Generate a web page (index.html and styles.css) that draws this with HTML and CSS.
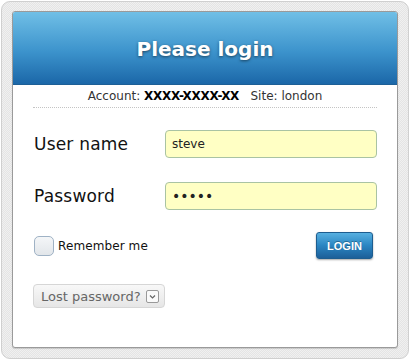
FILE: index.html
```html
<!DOCTYPE html>
<html>
<head>
<meta charset="utf-8">
<link rel="stylesheet" href="styles.css">
</head>
<body>
<div class="frame">
  <div class="card">
    <div class="header"><h1 class="title">Please login</h1></div>
    <div class="account">Account: <b class="acc-id">XXXX-XXXX-XX</b>&nbsp;&nbsp; Site: london</div>
    <div class="form">
      <div class="row">
        <label class="label">User name</label>
        <div class="input">steve</div>
      </div>
      <div class="row">
        <label class="label">Password</label>
        <div class="input dots">•••••</div>
      </div>
      <div class="actions">
        <div class="remember"><span class="checkbox"></span><span class="rem-text">Remember me</span></div>
        <button class="login">LOGIN</button>
      </div>
      <div class="lost-wrap">
        <div class="lost">Lost password? <span class="caret"><svg width="9" height="9" viewBox="0 0 9 9"><path d="M2 3.5 L4.5 6 L7 3.5" fill="none" stroke="#666" stroke-width="1.2"/></svg></span></div>
      </div>
    </div>
  </div>
</div>
</body>
</html>
```
FILE: styles.css
```css
html, body { margin: 0; padding: 0; background: #fff; }
body { font-family: "DejaVu Sans", Verdana, sans-serif; }
.frame {
  width: 386px;
  height: 337px;
  margin: 1px;
  padding: 9px 10px 10px 10px;
  border: 1px solid #cfcfcf;
  border-radius: 9px;
  background-color: #ebebeb;
  background-image: repeating-conic-gradient(#e4e4e4 0 25%, #f0f0f0 0 50%);
  background-size: 2px 2px;
}
.card {
  box-sizing: border-box;
  width: 386px;
  height: 337px;
  background: #fff;
  border: 1px solid #9a9a9a;
  border-radius: 3px;
  overflow: hidden;
  box-shadow: 0 1px 1px rgba(0,0,0,0.15);
}
.header {
  height: 72px;
  background: linear-gradient(#70bfe6, #3c93cc 55%, #1b67a8);
  display: flex;
  align-items: center;
  justify-content: center;
  border-bottom: 1px solid #1d5f96;
}
.title {
  margin: 0;
  color: #fff;
  font-size: 20px;
  font-weight: bold;
  text-shadow: 0 1px 3px rgba(0,0,0,0.55);
  padding-top: 2px;
}
.account {
  margin: 0 20px;
  height: 22px;
  line-height: 22px;
  font-size: 12px;
  color: #333;
  text-align: center;
  border-bottom: 1px dotted #c4c4c4;
}
.acc-id { color: #000; font-weight: bold; letter-spacing: -0.3px; }
.form { padding: 0 20px 0 21px; }
.row {
  display: flex;
  align-items: center;
  height: 28px;
  margin-top: 22px;
}
.row + .row { margin-top: 24px; }
.label {
  width: 131px;
  font-size: 17px;
  letter-spacing: 0.2px;
  color: #111;
}
.input {
  box-sizing: border-box;
  flex: 1;
  height: 28px;
  background: #ffffc4;
  border: 1px solid #a9c3a3;
  border-radius: 4px;
  font-size: 12px;
  color: #222;
  padding-left: 6px;
  display: flex;
  align-items: center;
}
.dots { font-size: 14px; letter-spacing: 0; font-family: "DejaVu Sans", sans-serif; }
.actions {
  display: flex;
  justify-content: space-between;
  align-items: center;
  margin-top: 22px;
  padding-right: 4px;
}
.remember { display: flex; align-items: center; }
.checkbox {
  box-sizing: border-box;
  width: 20px;
  height: 20px;
  border: 1px solid #9fb2c5;
  border-radius: 5px;
  background: linear-gradient(#f4f6f8, #e2e6ea);
  margin-right: 4px;
}
.rem-text { font-size: 12px; color: #111; letter-spacing: 0.1px; }
.login {
  box-sizing: border-box;
  width: 57px;
  height: 27px;
  border: 1px solid #1d5d8f;
  border-radius: 3px;
  background: linear-gradient(#57b0e0, #2a85c2 50%, #1c5f99);
  color: #fff;
  font-family: "Liberation Sans", Arial, sans-serif;
  font-weight: bold;
  font-size: 11px;
  padding: 0;
  box-shadow: 0 1px 2px rgba(0,0,0,0.35);
  text-shadow: 0 -1px 0 rgba(0,0,0,0.3);
}
.lost-wrap { margin-top: 25px; display: flex; }
.lost {
  box-sizing: border-box;
  height: 24px;
  padding: 0 5px 0 7px;
  border: 1px solid #d6d6d6;
  border-radius: 4px;
  background: linear-gradient(#f8f8f8, #e6e6e6);
  font-size: 13px;
  color: #666;
  display: flex;
  align-items: center;
  margin-left: -1px;
}
.caret {
  box-sizing: border-box;
  display: inline-flex;
  align-items: center;
  justify-content: center;
  width: 13px;
  height: 13px;
  border: 1px solid #999;
  border-radius: 2px;
  background: #fafafa;
  margin-left: 5px;
}
```
